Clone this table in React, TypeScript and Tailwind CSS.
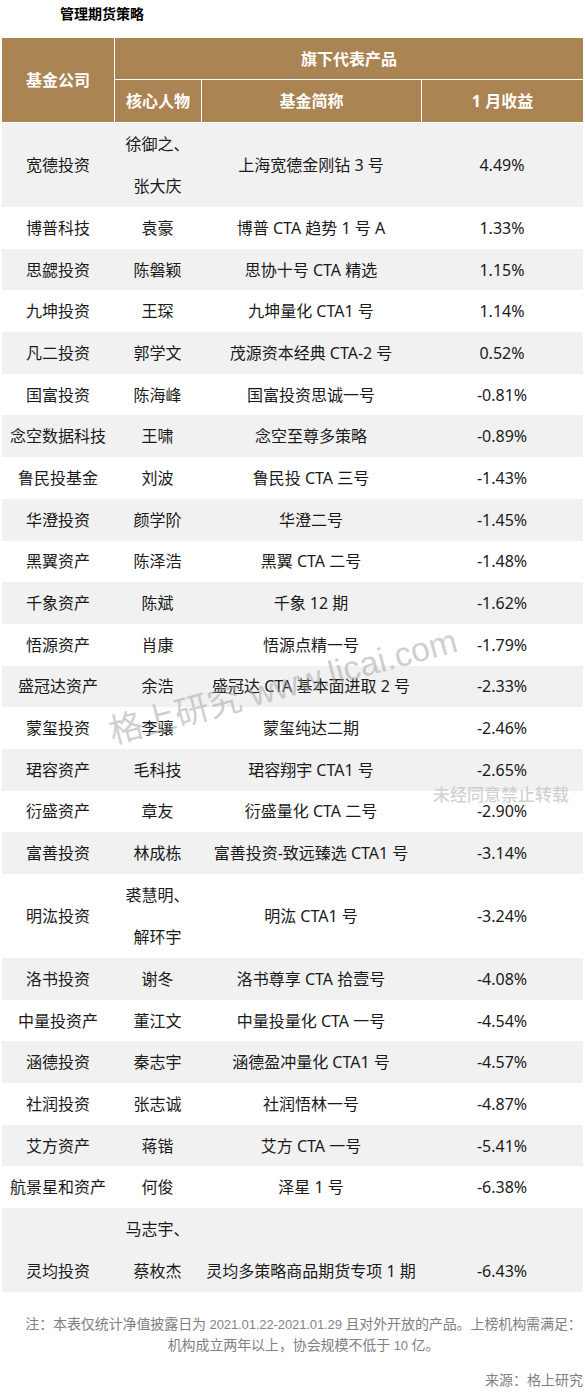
import React from 'react';

type Row = {
  company: string;
  people: string[];
  fund: string;
  ret: string;
  bottom?: boolean;
};

const rows: Row[] = [
  { company: '宽德投资', people: ['徐御之、', '张大庆'], fund: '上海宽德金刚钻 3 号', ret: '4.49%' },
  { company: '博普科技', people: ['袁豪'], fund: '博普 CTA 趋势 1 号 A', ret: '1.33%' },
  { company: '思勰投资', people: ['陈磐颖'], fund: '思协十号 CTA 精选', ret: '1.15%' },
  { company: '九坤投资', people: ['王琛'], fund: '九坤量化 CTA1 号', ret: '1.14%' },
  { company: '凡二投资', people: ['郭学文'], fund: '茂源资本经典 CTA-2 号', ret: '0.52%' },
  { company: '国富投资', people: ['陈海峰'], fund: '国富投资思诚一号', ret: '-0.81%' },
  { company: '念空数据科技', people: ['王啸'], fund: '念空至尊多策略', ret: '-0.89%' },
  { company: '鲁民投基金', people: ['刘波'], fund: '鲁民投 CTA 三号', ret: '-1.43%' },
  { company: '华澄投资', people: ['颜学阶'], fund: '华澄二号', ret: '-1.45%' },
  { company: '黑翼资产', people: ['陈泽浩'], fund: '黑翼 CTA 二号', ret: '-1.48%' },
  { company: '千象资产', people: ['陈斌'], fund: '千象 12 期', ret: '-1.62%' },
  { company: '悟源资产', people: ['肖康'], fund: '悟源点精一号', ret: '-1.79%' },
  { company: '盛冠达资产', people: ['余浩'], fund: '盛冠达 CTA 基本面进取 2 号', ret: '-2.33%' },
  { company: '蒙玺投资', people: ['李骧'], fund: '蒙玺纯达二期', ret: '-2.46%' },
  { company: '珺容资产', people: ['毛科技'], fund: '珺容翔宇 CTA1 号', ret: '-2.65%' },
  { company: '衍盛资产', people: ['章友'], fund: '衍盛量化 CTA 二号', ret: '-2.90%' },
  { company: '富善投资', people: ['林成栋'], fund: '富善投资-致远臻选 CTA1 号', ret: '-3.14%' },
  { company: '明汯投资', people: ['裘慧明、', '解环宇'], fund: '明汯 CTA1 号', ret: '-3.24%' },
  { company: '洛书投资', people: ['谢冬'], fund: '洛书尊享 CTA 拾壹号', ret: '-4.08%' },
  { company: '中量投资产', people: ['董江文'], fund: '中量投量化 CTA 一号', ret: '-4.54%' },
  { company: '涵德投资', people: ['秦志宇'], fund: '涵德盈冲量化 CTA1 号', ret: '-4.57%' },
  { company: '社润投资', people: ['张志诚'], fund: '社润悟林一号', ret: '-4.87%' },
  { company: '艾方资产', people: ['蒋锴'], fund: '艾方 CTA 一号', ret: '-5.41%' },
  { company: '航景星和资产', people: ['何俊'], fund: '泽星 1 号', ret: '-6.38%' },
  { company: '灵均投资', people: ['马志宇、', '蔡枚杰'], fund: '灵均多策略商品期货专项 1 期', ret: '-6.43%', bottom: true },
];

const font = { fontFamily: '"Noto Sans", "Noto Sans CJK SC", sans-serif' };
const latin = { fontFamily: '"Liberation Sans", "Noto Sans CJK SC", sans-serif' };

function TableRow({ row, index }: { row: Row; index: number }) {
  const tall = row.people.length > 1;
  const bg = index % 2 === 0 ? 'bg-[#f1f1f1]' : 'bg-white';
  const align = row.bottom ? 'items-end' : 'items-center';
  return (
    <div className={`flex ${bg} ${tall ? 'h-[84px]' : 'h-[41.7px]'} ${align} text-[16px] text-[#1a1a1a]`}>
      <div className="w-[112px] h-[42px] flex items-center justify-center whitespace-nowrap">{row.company}</div>
      <div className="w-[87px] self-stretch flex flex-col justify-center">
        {row.people.map((p) => (
          <div key={p} className="h-[42px] flex items-center justify-center whitespace-nowrap">
            {p}
          </div>
        ))}
      </div>
      <div className="w-[220px] h-[42px] flex items-center justify-center whitespace-nowrap">{row.fund}</div>
      <div className="flex-1 h-[42px] flex items-center justify-center">{row.ret}</div>
    </div>
  );
}

export default function App() {
  return (
    <div className="relative w-[585px] h-[1399px] bg-white overflow-hidden" style={font}>
      <div className="h-[38px] pl-[60px] pt-[4px] text-[14px] leading-[20px] font-bold text-black">管理期货策略</div>

      <div className="mx-[2px]">
        <div className="flex h-[84px] bg-[#ab8453] text-white font-bold text-[16px]">
          <div className="w-[112px] flex items-center justify-center">基金公司</div>
          <div className="flex-1 flex flex-col border-l border-white">
            <div className="h-[42px] flex items-center justify-center border-b border-white">旗下代表产品</div>
            <div className="flex-1 flex">
              <div className="w-[86px] flex items-center justify-center">核心人物</div>
              <div className="w-[220px] flex items-center justify-center border-l border-white">基金简称</div>
              <div className="flex-1 flex items-center justify-center border-l border-white">1 月收益</div>
            </div>
          </div>
        </div>

        <div className="mt-px">
          {rows.map((r, i) => (
            <TableRow key={r.company} row={r} index={i} />
          ))}
        </div>
      </div>

      <div className="mt-[22px] pl-[22px] text-center text-[14px] leading-[20px] tracking-[-0.1px] text-[#808080] whitespace-nowrap">
        <div>
          注：本表仅统计净值披露日为{' '}
          <span className="text-[13px] text-[#7d8591]" style={latin}>2021.01.22-2021.01.29</span>
          {' '}且对外开放的产品。上榜机构需满足：
        </div>
        <div>
          机构成立两年以上，协会规模不低于 <span className="text-[13px] text-[#7d8591]" style={latin}>10</span> 亿。
        </div>
      </div>
      <div className="mt-[14px] pr-[2px] text-right text-[14px] leading-[20px] text-[#808080]">来源：格上研究</div>

      <div
        className="absolute left-[283px] top-[686px] -translate-x-1/2 -translate-y-1/2 -rotate-15 whitespace-nowrap text-[34px] leading-none text-[rgba(160,160,160,0.5)] pointer-events-none"
        style={latin}
      >
        格上研究 www.licai.com
      </div>
      <div className="absolute left-[433px] top-[784px] text-[17px] leading-[22px] font-medium text-[rgba(190,190,190,0.7)] whitespace-nowrap pointer-events-none">
        未经同意禁止转载
      </div>
    </div>
  );
}
